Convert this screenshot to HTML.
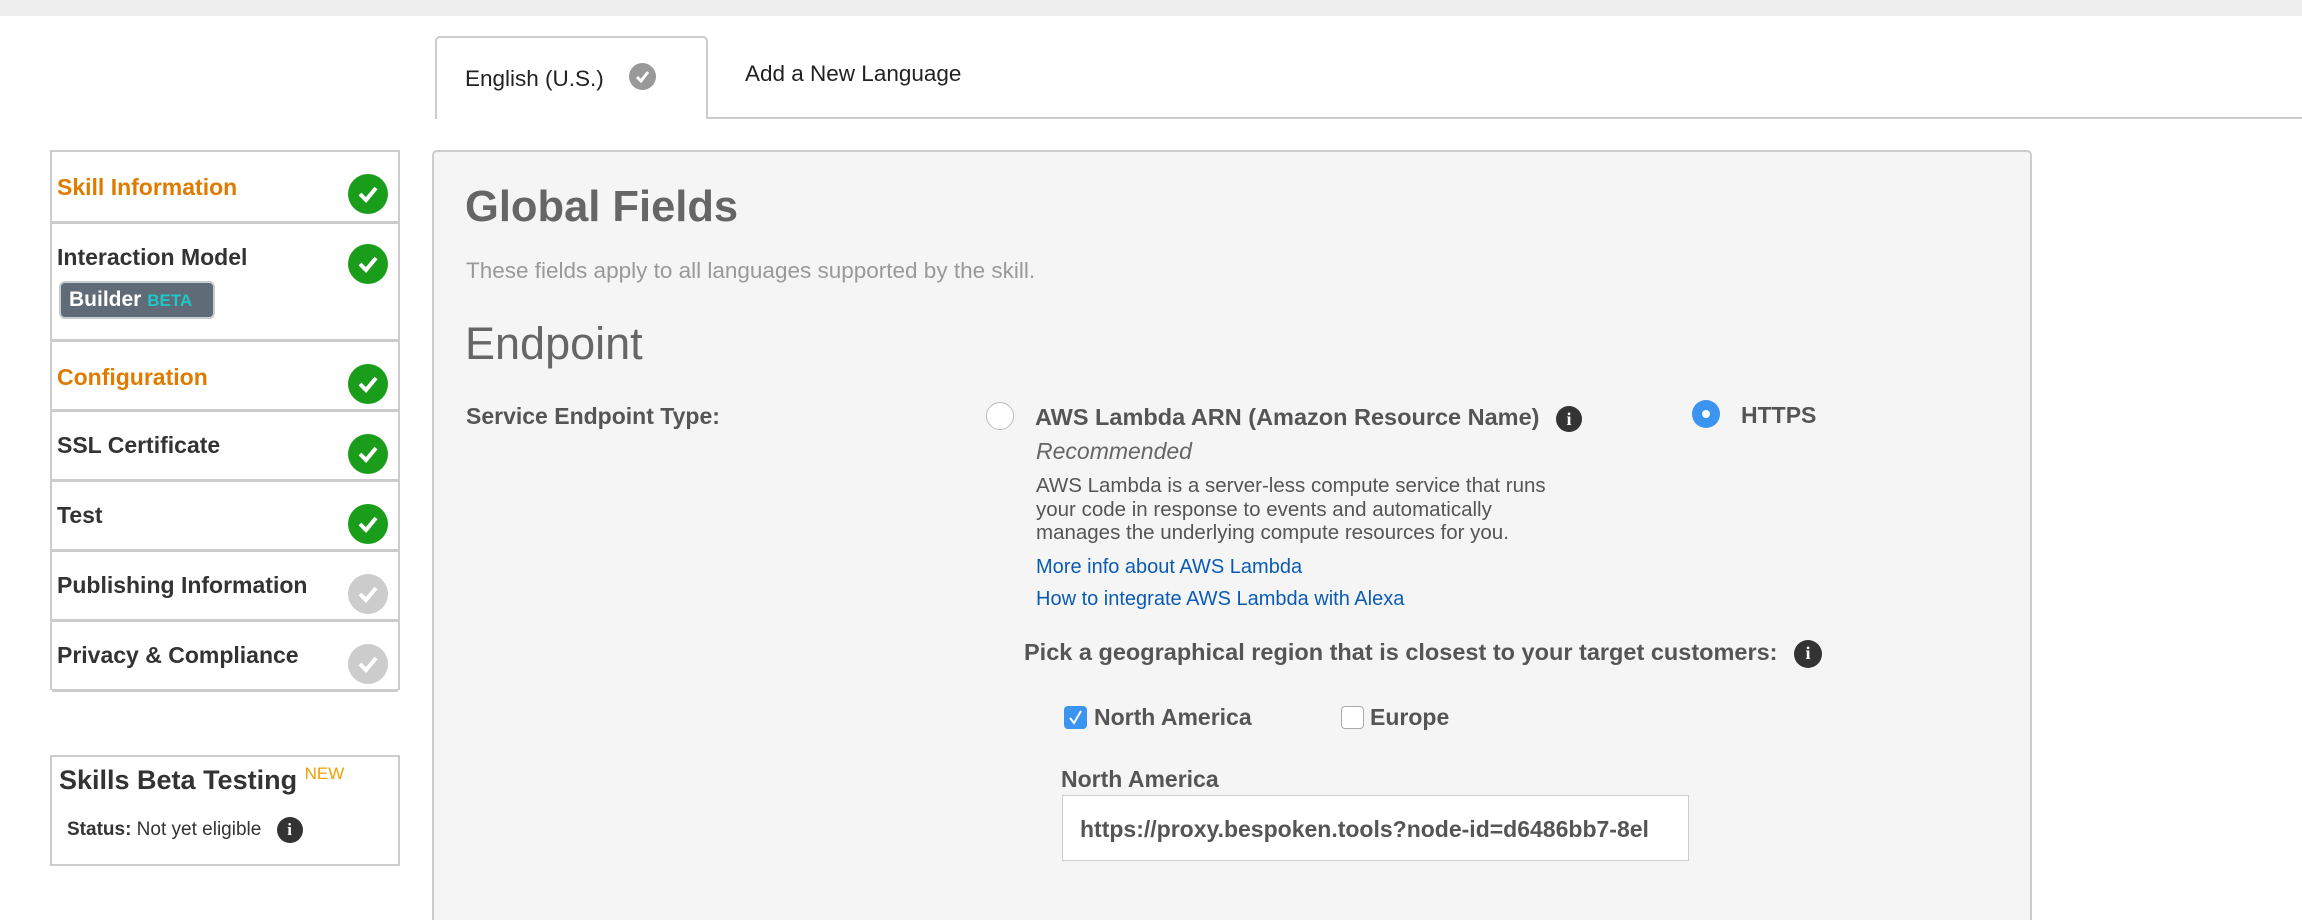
<!DOCTYPE html>
<html><head><meta charset="utf-8"><style>
*{margin:0;padding:0;box-sizing:border-box}
html,body{width:2302px;height:920px;overflow:hidden}
body{background:#fff;font-family:"Liberation Sans",Arial,sans-serif;color:#444;position:relative}
.a{position:absolute;white-space:nowrap}
.topbar{left:0;top:0;width:2302px;height:16px;background:#eee}
.tabline{left:435px;top:117px;width:1867px;height:2px;background:#ccc}
.tab{left:435px;top:36px;width:273px;height:83px;border:2px solid #ccc;border-bottom:none;border-radius:5px 5px 0 0;background:#fff}
.side{left:50px;top:150px;width:350px;height:540px;border:2px solid #ccc;border-bottom:none}
.row{position:absolute;left:0;width:346px;border-bottom:3px solid #ccc}
.row span{position:absolute;left:5px;font-size:23px;font-weight:bold;color:#333}
.row span.o{color:#e07b00}
.ck{position:absolute;left:296px;width:40px;height:40px;border-radius:50%;background:#1a9d1a}
.ck.g{background:#ccc}
.ck svg{position:absolute;left:9px;top:10px}
.panel{left:432px;top:150px;width:1600px;height:800px;background:#f5f5f5;border:2px solid #ccc;border-radius:5px}
.info{display:inline-block;width:26px;height:26px;border-radius:50%;background:#333;color:#fff;font:bold 18px/26px "Liberation Serif",serif;text-align:center;vertical-align:middle}
a{color:#0b5bb5}
</style></head><body>
<div class="a topbar"></div>
<div class="a tabline"></div>
<div class="a tab"></div>
<div class="a" style="left:465px;top:66px;font-size:22.5px;color:#222">English (U.S.)</div>
<div class="a" style="left:629px;top:63px;width:27px;height:27px;border-radius:50%;background:#999"><svg width="27" height="27"><path d="M8 14l4 4 7-9" stroke="#fff" stroke-width="3" fill="none"/></svg></div>
<div class="a" style="left:745px;top:61px;font-size:22.5px;color:#222">Add a New Language</div>

<div class="a side">
 <div class="row" style="top:0;height:72px"><span class="o" style="top:22px">Skill Information</span><div class="ck" style="top:22px"><svg width="22" height="20"><path d="M3 10l6 6 10-12" stroke="#fff" stroke-width="4" fill="none"/></svg></div></div>
 <div class="row" style="top:72px;height:118px"><span style="top:20px">Interaction Model</span><div class="ck" style="top:20px"><svg width="22" height="20"><path d="M3 10l6 6 10-12" stroke="#fff" stroke-width="4" fill="none"/></svg></div>
  <div style="position:absolute;left:7px;top:57px;width:156px;height:38px;background:#5f6b77;border:2px solid #c8ccd0;border-radius:6px;font-size:21px;font-weight:bold;color:#fff;padding:5px 0 0 8px">Builder <span style="position:static;font-size:17px;color:#1fc7c7">BETA</span></div></div>
 <div class="row" style="top:190px;height:70px"><span class="o" style="top:22px">Configuration</span><div class="ck" style="top:22px"><svg width="22" height="20"><path d="M3 10l6 6 10-12" stroke="#fff" stroke-width="4" fill="none"/></svg></div></div>
 <div class="row" style="top:260px;height:70px"><span style="top:20px">SSL Certificate</span><div class="ck" style="top:22px"><svg width="22" height="20"><path d="M3 10l6 6 10-12" stroke="#fff" stroke-width="4" fill="none"/></svg></div></div>
 <div class="row" style="top:330px;height:70px"><span style="top:20px">Test</span><div class="ck" style="top:22px"><svg width="22" height="20"><path d="M3 10l6 6 10-12" stroke="#fff" stroke-width="4" fill="none"/></svg></div></div>
 <div class="row" style="top:400px;height:70px"><span style="top:20px">Publishing Information</span><div class="ck g" style="top:22px"><svg width="22" height="20"><path d="M3 10l6 6 10-12" stroke="#fff" stroke-width="4" fill="none"/></svg></div></div>
 <div class="row" style="top:470px;height:70px"><span style="top:20px">Privacy &amp; Compliance</span><div class="ck g" style="top:22px"><svg width="22" height="20"><path d="M3 10l6 6 10-12" stroke="#fff" stroke-width="4" fill="none"/></svg></div></div>
</div>

<div class="a" style="left:50px;top:755px;width:350px;height:111px;border:2px solid #ccc"></div>
<div class="a" style="left:59px;top:764px;font-size:27px;font-weight:bold;color:#333">Skills Beta Testing <sup style="font-size:17px;font-weight:normal;color:#f0a000;vertical-align:10px">NEW</sup></div>
<div class="a" style="left:67px;top:817px;font-size:19px;color:#333"><b>Status:</b> Not yet eligible <span class="info" style="width:26px;height:26px;margin-left:10px;font-size:17px">i</span></div>

<div class="a panel"></div>
<div class="a" style="left:465px;top:183px;font-size:43.5px;font-weight:bold;color:#666">Global Fields</div>
<div class="a" style="left:466px;top:258px;font-size:22.5px;color:#999">These fields apply to all languages supported by the skill.</div>
<div class="a" style="left:465px;top:318px;font-size:45px;color:#666">Endpoint</div>
<div class="a" style="left:466px;top:403px;font-size:23px;font-weight:bold;color:#555">Service Endpoint Type:</div>

<div class="a" style="left:986px;top:402px;width:28px;height:28px;border-radius:50%;background:#fff;border:1px solid #bbb"></div>
<div class="a" style="left:1035px;top:404px;font-size:23.5px;font-weight:bold;color:#555">AWS Lambda ARN (Amazon Resource Name) <span class="info" style="margin-left:10px">i</span></div>
<div class="a" style="left:1692px;top:400px;width:28px;height:28px;border-radius:50%;background:#3a94f0"><div style="position:absolute;left:10px;top:10px;width:8px;height:8px;border-radius:50%;background:#fff"></div></div>
<div class="a" style="left:1741px;top:402px;font-size:23px;font-weight:bold;color:#555">HTTPS</div>
<div class="a" style="left:1036px;top:438px;font-size:23px;font-style:italic;color:#666">Recommended</div>
<div class="a" style="left:1036px;top:474px;font-size:20.5px;line-height:23.5px;color:#555">AWS Lambda is a server-less compute service that runs<br>your code in response to events and automatically<br>manages the underlying compute resources for you.</div>
<div class="a" style="left:1036px;top:556px;font-size:20px"><a>More info about AWS Lambda</a></div>
<div class="a" style="left:1036px;top:588px;font-size:20px"><a>How to integrate AWS Lambda with Alexa</a></div>
<div class="a" style="left:1024px;top:639px;font-size:23.5px;font-weight:bold;color:#555">Pick a geographical region that is closest to your target customers: <span class="info" style="width:28px;height:28px;margin-left:10px">i</span></div>
<div class="a" style="left:1064px;top:706px;width:23px;height:23px;border-radius:4px;background:#3a94f0"><svg width="23" height="23"><path d="M6 12l4 5 7-12" stroke="#fff" stroke-width="2" fill="none"/></svg></div>
<div class="a" style="left:1094px;top:704px;font-size:23px;font-weight:bold;color:#555">North America</div>
<div class="a" style="left:1341px;top:706px;width:23px;height:23px;border-radius:4px;background:#fff;border:1px solid #aaa"></div>
<div class="a" style="left:1370px;top:704px;font-size:23px;font-weight:bold;color:#555">Europe</div>
<div class="a" style="left:1061px;top:766px;font-size:23px;font-weight:bold;color:#555">North America</div>
<div class="a" style="left:1062px;top:795px;width:627px;height:66px;background:#fff;border:1px solid #ccc;overflow:hidden"><div style="position:absolute;left:17px;top:20px;font-size:23px;font-weight:bold;color:#555;white-space:nowrap">https://proxy.bespoken.tools?node-id=d6486bb7-8el</div></div>
</body></html>
